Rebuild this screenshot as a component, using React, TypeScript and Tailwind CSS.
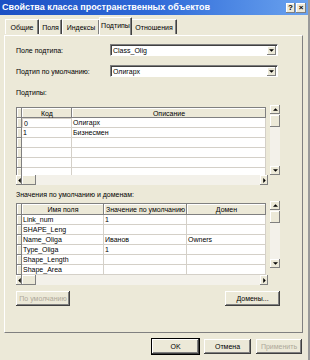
import React from "react";

const raised =
  "shadow-[inset_-1px_-1px_0_#404040,inset_1px_1px_0_#ffffff,inset_-2px_-2px_0_#808080,inset_2px_2px_0_#ece9d8]";
const raisedSoft = "shadow-[inset_-1px_-1px_0_#808080,inset_1px_1px_0_#ffffff]";

function Tri({ dir }: { dir: "up" | "down" | "left" | "right" }) {
  const pts: Record<string, string> = {
    up: "0,3 3,0 6,3",
    down: "0,0 6,0 3,3",
    left: "3,0 3,6 0,3",
    right: "0,0 0,6 3,3",
  };
  const vert = dir === "up" || dir === "down";
  return (
    <svg width={vert ? 5 : 3} height={vert ? 3 : 5} viewBox={vert ? "0 0 6 3" : "0 0 3 6"}>
      <polygon points={pts[dir]} fill="#000" />
    </svg>
  );
}

function SBtn({ dir, cls }: { dir: "up" | "down" | "left" | "right"; cls: string }) {
  return (
    <div className={`${cls} bg-[#ece9d8] ${raisedSoft} flex items-center justify-center shrink-0`}>
      <Tri dir={dir} />
    </div>
  );
}

function VScroll({ h }: { h: string }) {
  return (
    <div className={`w-[10px] ${h} flex flex-col bg-[#f3f1ea]`}>
      <SBtn dir="up" cls="w-[10px] h-[9px]" />
      <div className={`w-[10px] h-[12px] mt-[1px] bg-[#ece9d8] ${raisedSoft}`} />
      <div className="flex-1" />
      <SBtn dir="down" cls="w-[10px] h-[9px]" />
    </div>
  );
}

function HScroll() {
  return (
    <div className="h-[10px] flex bg-[#f3f1ea]">
      <SBtn dir="left" cls="w-[6px] h-[10px]" />
      <div className={`w-[14px] h-[10px] bg-[#ece9d8] ${raisedSoft}`} />
      <div className="flex-1" />
      <SBtn dir="right" cls="w-[8px] h-[10px]" />
    </div>
  );
}

type Col = { w: string; label: string };

function Grid({
  cols,
  rows,
  bodyH,
  vh,
  headH,
  focus,
}: {
  cols: Col[];
  rows: string[][];
  bodyH: string;
  vh: string;
  headH: string;
  focus?: boolean;
}) {
  return (
    <div className="flex items-start">
      <div className="flex flex-col w-[252px]">
        <div className={`${bodyH} overflow-hidden bg-white border-t border-l border-[#808080] w-[250px]`}>
          <div className={`flex ${headH}`}>
            <div className={`w-[5px] h-full bg-[#ece9d8] ${raisedSoft}`} />
            {cols.map((c, i) => (
              <div
                key={i}
                className={`${c.w} h-full bg-[#ece9d8] ${raisedSoft} flex items-center justify-center whitespace-nowrap overflow-hidden`}
              >
                {c.label}
              </div>
            ))}
          </div>
          {rows.map((r, ri) => (
            <div key={ri} className="flex h-[10px]">
              <div className={`w-[5px] h-full bg-[#ece9d8] ${raisedSoft}`} />
              {cols.map((c, ci) => (
                <div
                  key={ci}
                  className={`${c.w} h-full border-b border-r border-[#d4d0c8] flex items-center pl-[1px] whitespace-nowrap overflow-hidden ${
                    focus && ri === 0 && ci === 0 ? "border border-[#202020]" : ""
                  }`}
                >
                  {r[ci] ?? ""}
                </div>
              ))}
            </div>
          ))}
        </div>
        <HScroll />
      </div>
      <div className="ml-[2px] -mt-[2px]">
        <VScroll h={vh} />
      </div>
    </div>
  );
}

function Combo({ value }: { value: string }) {
  return (
    <div className="w-[168px] h-[12px] bg-white border-t border-l border-[#7f7f7f] border-r border-b border-r-[#ffffff] border-b-[#ffffff] shadow-[inset_1px_1px_0_#404040] flex items-center">
      <span className="flex-1 pl-[2px]">{value}</span>
      <SBtn dir="down" cls="w-[9px] h-[9px] mr-[1px]" />
    </div>
  );
}

function Btn({ label, w, disabled, def }: { label: string; w: string; disabled?: boolean; def?: boolean }) {
  return (
    <div
      className={`${w} h-[15px] bg-[#ece9d8] ${raised} flex items-center justify-center ${
        disabled ? "text-[#aca899]" : "text-black"
      } ${def ? "outline outline-1 outline-black" : ""}`}
    >
      {label}
    </div>
  );
}

function Tab({ label, w, sel }: { label: string; w: string; sel?: boolean }) {
  return (
    <div
      className={`${w} ${
        sel ? "h-[18px] -mx-[1px] z-10 bg-[#ece9d8] pb-[2px]" : "h-[15px] mb-[1px]"
      } border-t border-l border-white border-r border-r-[#404040] shadow-[inset_-1px_0_0_#808080] rounded-t-[1px] flex items-center justify-center whitespace-nowrap`}
    >
      {label}
    </div>
  );
}

export default function App() {
  const g1 = [
    ["0", "Олигарх"],
    ["1", "Бизнесмен"],
    ["", ""],
    ["", ""],
    ["", ""],
    ["", ""],
  ];
  const g2 = [
    ["Link_num", "1", ""],
    ["SHAPE_Leng", "", ""],
    ["Name_Oliga", "Иванов", "Owners"],
    ["Type_Oliga", "1", ""],
    ["Shape_Length", "", ""],
    ["Shape_Area", "", ""],
  ];
  return (
    <div className="w-[310px] h-[360px] bg-[#ece9d8] flex flex-col overflow-hidden font-['Liberation_Sans',Arial,sans-serif] text-[7px] leading-none text-black border-r-2 border-r-[#9a9a9a]">
      <div className="h-[15px] shrink-0 flex items-center justify-between pl-[2px] pr-[2px] bg-gradient-to-r from-[#1c50c4] via-[#2f6ad8] to-[#6aa2ee]">
        <span className="text-white font-bold text-[9px]">
          Свойства класса пространственных объектов
        </span>
        <div className="flex gap-[1px]">
          <div className={`w-[9px] h-[10px] bg-[#ece9d8] ${raisedSoft} flex items-center justify-center font-bold text-[8px]`}>?</div>
          <div className={`w-[10px] h-[10px] bg-[#ece9d8] ${raisedSoft} flex items-center justify-center font-bold text-[8px]`}>×</div>
        </div>
      </div>

      <div className="h-[20px] shrink-0 flex items-end pl-[5px]">
        <Tab label="Общие" w="w-[34px]" />
        <Tab label="Поля" w="w-[23px]" />
        <Tab label="Индексы" w="w-[38px]" />
        <Tab label="Подтипы" w="w-[33px]" sel />
        <Tab label="Отношения" w="w-[46px]" />
      </div>

      <div className="ml-[4px] mr-[5px] h-[298px] shrink-0 border-t border-l border-white border-r border-b border-r-[#808080] border-b-[#808080] flex flex-col pl-[11px] pt-[8px]">
        <div className="flex items-center h-[12px]">
          <span className="w-[94px]">Поле подтипа:</span>
          <Combo value="Class_Olig" />
        </div>
        <div className="flex items-center h-[12px] mt-[9px]">
          <span className="w-[94px]">Подтип по умолчанию:</span>
          <Combo value="Олигарх" />
        </div>
        <div className="mt-[12px] h-[8px]">Подтипы:</div>
        <div className="mt-[10px]">
          <Grid
            cols={[
              { w: "w-[50px]", label: "Код" },
              { w: "w-[194px]", label: "Описание" },
            ]}
            rows={g1}
            bodyH="h-[68px]"
            vh="h-[70px]"
            headH="h-[10px]"
            focus
          />
        </div>
        <div className="mt-[6px] h-[8px]">Значения по умолчанию и доменам:</div>
        <div className="mt-[4px]">
          <Grid
            cols={[
              { w: "w-[82px]", label: "Имя поля" },
              { w: "w-[83px]", label: "Значение по умолчанию" },
              { w: "w-[79px]", label: "Домен" },
            ]}
            rows={g2}
            bodyH="h-[72px]"
            vh="h-[67px]"
            headH="h-[11px]"
          />
        </div>
        <div className="mt-[6px] flex justify-between w-[264px]">
          <Btn label="По умолчанию" w="w-[54px]" disabled />
          <Btn label="Домены..." w="w-[55px]" />
        </div>
      </div>

      <div className="flex justify-end gap-[5px] pr-[6px] mt-[6px]">
        <Btn label="OK" w="w-[47px]" def />
        <Btn label="Отмена" w="w-[47px]" />
        <Btn label="Применить" w="w-[46px]" disabled />
      </div>
    </div>
  );
}
